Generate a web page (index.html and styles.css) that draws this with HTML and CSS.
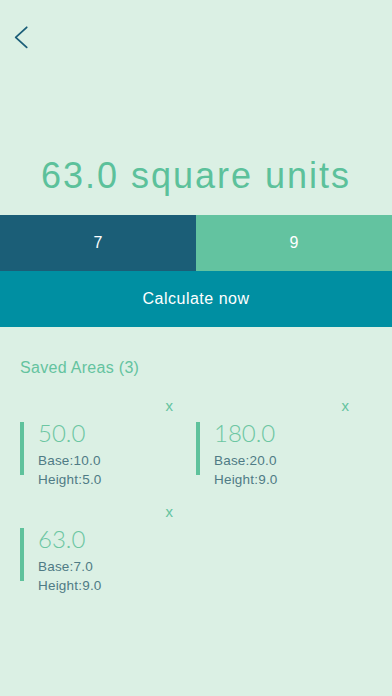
FILE: index.html
```html
<!DOCTYPE html>
<html lang="en">
<head>
<meta charset="utf-8">
<title>Area</title>
<link rel="stylesheet" href="styles.css">
</head>
<body>
<div class="screen">
  <header class="header">
    <svg class="back" width="24" height="24" viewBox="0 0 24 24" aria-hidden="true">
      <polyline points="16.7,2.3 5.7,12.3 16.7,22.3" fill="none" stroke="#1b5e78" stroke-width="1.8" stroke-linecap="round" stroke-linejoin="round"/>
    </svg>
  </header>
  <h1 class="result">63.0 square units</h1>
  <div class="inputs">
    <div class="input input-base">7</div>
    <div class="input input-height">9</div>
  </div>
  <button class="calc">Calculate now</button>
  <h2 class="saved-title">Saved Areas (3)</h2>
  <div class="cards">
    <div class="card">
      <div class="card-close"><span>x</span></div>
      <div class="card-body">
        <div class="card-bar"></div>
        <div class="card-text">
          <div class="card-value">50.0</div>
          <div class="card-line">Base:10.0</div>
          <div class="card-line">Height:5.0</div>
        </div>
      </div>
    </div>
    <div class="card">
      <div class="card-close"><span>x</span></div>
      <div class="card-body">
        <div class="card-bar"></div>
        <div class="card-text">
          <div class="card-value">180.0</div>
          <div class="card-line">Base:20.0</div>
          <div class="card-line">Height:9.0</div>
        </div>
      </div>
    </div>
    <div class="card">
      <div class="card-close"><span>x</span></div>
      <div class="card-body">
        <div class="card-bar"></div>
        <div class="card-text">
          <div class="card-value">63.0</div>
          <div class="card-line">Base:7.0</div>
          <div class="card-line">Height:9.0</div>
        </div>
      </div>
    </div>
  </div>
</div>
</body>
</html>
```
FILE: styles.css
```css
html, body {
  margin: 0;
  padding: 0;
  background: #dbf0e4;
}
body {
  font-family: "Liberation Sans", Arial, sans-serif;
}
.screen {
  width: 392px;
  height: 696px;
  background: #dbf0e4;
  overflow: hidden;
}
.header {
  display: flex;
  padding: 25px 0 0 10px;
  height: 24px;
}
.back {
  display: block;
}
.result {
  margin: 106px 0 18px;
  font-size: 36px;
  line-height: 42px;
  font-weight: 400;
  letter-spacing: 2px;
  text-align: center;
  color: #5cc19b;
}
.inputs {
  display: flex;
  height: 56px;
}
.input {
  flex: 1;
  display: flex;
  align-items: center;
  justify-content: center;
  color: #ffffff;
  font-size: 16px;
}
.input-base {
  background: #1b5e77;
}
.input-height {
  background: #63c3a0;
}
.calc {
  display: flex;
  align-items: center;
  justify-content: center;
  width: 100%;
  height: 56px;
  margin: 0;
  padding: 0;
  border: 0;
  background: #008fa2;
  color: #ffffff;
  font-family: "Liberation Sans", Arial, sans-serif;
  font-size: 16px;
  letter-spacing: 0.5px;
}
.saved-title {
  margin: 31px 0 0 20px;
  font-size: 16px;
  line-height: 20px;
  font-weight: 400;
  letter-spacing: 0.3px;
  color: #64c39f;
}
.cards {
  display: grid;
  grid-template-columns: 176px 176px;
  row-gap: 14px;
  padding: 19px 0 0 20px;
}
.card {
  display: flex;
  flex-direction: column;
}
.card-close {
  display: flex;
  justify-content: flex-end;
  padding-right: 23px;
  height: 18px;
  margin-bottom: 7px;
  font-size: 15px;
  line-height: 18px;
  color: #64c39f;
}
.card-body {
  display: flex;
  align-items: flex-start;
}
.card-bar {
  width: 4px;
  height: 53px;
  background: #5fc29c;
  flex: none;
}
.card-text {
  margin-left: 14px;
  display: flex;
  flex-direction: column;
}
.card-value {
  font-family: "Lato", "Liberation Sans", sans-serif;
  font-weight: 300;
  font-size: 24px;
  line-height: 26px;
  color: #6cc6a2;
  margin-top: -2px;
  margin-bottom: 5px;
}
.card-line {
  font-size: 13.5px;
  line-height: 19px;
  letter-spacing: 0.2px;
  color: #4f7b85;
}
```
